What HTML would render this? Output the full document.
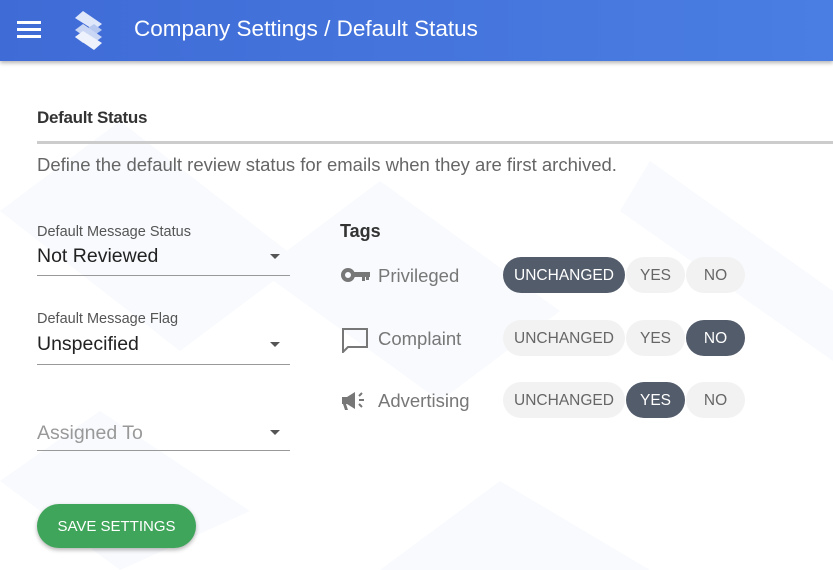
<!DOCTYPE html>
<html><head><style>
body{margin:0;width:833px;height:570px;overflow:hidden;background:#fff;font-family:"Liberation Sans",sans-serif;position:relative}
.hdr{position:absolute;left:0;top:0;width:833px;height:61px;background:linear-gradient(90deg,#3f6bd6,#4a7ee2);box-shadow:0 2px 4px rgba(0,0,0,.3)}
.t{position:absolute;white-space:nowrap}
.sel{position:absolute;left:37px;width:253px;border-bottom:1px solid #999}
.arr{position:absolute;right:10px;width:0;height:0;border-left:5px solid transparent;border-right:5px solid transparent;border-top:5px solid #555}
.b{position:absolute;height:36px;border-radius:18px;background:#f2f2f2;color:#666;font-size:15.5px;line-height:37px;text-align:center}
.on{background:#535c6b;color:#fff}
</style></head><body>
<svg style="position:absolute;left:0;top:61px" width="833" height="509">
<g fill="#f8fafd"><path d="M0 150 L120 60 L300 200 L180 290Z"/><path d="M380 120 L560 250 L440 340 L260 210Z"/><path d="M650 100 L833 230 L833 300 L620 150Z"/><path d="M100 350 L250 450 L120 509 L0 420Z"/><path d="M500 420 L650 509 L380 509Z"/></g></svg>
<div class="hdr">
<div style="position:absolute;left:17px;top:21px;width:24px;height:3px;background:#fff;box-shadow:0 7px 0 #fff,0 14px 0 #fff"></div>
<svg style="position:absolute;left:74px;top:9px" width="30" height="42"><path d="M1 9 L9 2 L28 15 L20 21Z" fill="#dfe7fa"/><path d="M20 15 L28 21 L9 34 L1 28Z" fill="#b6c8f0"/><path d="M1 21 L9 15 L28 28 L20 34Z" fill="#c9d7f5"/><path d="M1 28 L9 22 L28 34 L20 41Z" fill="#eef2fc"/></svg>
<div class="t" style="left:134px;top:16px;color:#fff;font-size:22.5px">Company Settings / Default Status</div>
</div>
<div class="t" style="left:37px;top:108px;font-size:17px;color:#333;font-weight:bold;letter-spacing:-0.3px">Default Status</div>
<div style="position:absolute;left:37px;top:141px;width:796px;height:3px;background:#ccc"></div>
<div class="t" style="left:37px;top:154px;font-size:18.5px;color:#666">Define the default review status for emails when they are first archived.</div>

<div class="t" style="left:37px;top:224px;font-size:14.5px;color:#555">Default Message Status</div>
<div class="sel" style="top:243px;height:32px"><div class="t" style="left:0;top:2px;font-size:19.5px;color:#222">Not Reviewed</div><div class="arr" style="top:11px"></div></div>
<div class="t" style="left:37px;top:311px;font-size:14.5px;color:#555">Default Message Flag</div>
<div class="sel" style="top:330px;height:34px"><div class="t" style="left:0;top:3px;font-size:19.5px;color:#222">Unspecified</div><div class="arr" style="top:12px"></div></div>
<div class="sel" style="top:420px;height:30px"><div class="t" style="left:0;top:2px;font-size:19.5px;color:#999">Assigned To</div><div class="arr" style="top:10px"></div></div>

<div style="position:absolute;left:37px;top:504px;width:159px;height:44px;border-radius:22px;background:#3fa55a;box-shadow:0 2px 4px rgba(0,0,0,.3);color:#fff;font-size:15px;line-height:45px;text-align:center">SAVE SETTINGS</div>

<div class="t" style="left:340px;top:221px;font-size:18px;color:#333;font-weight:bold">Tags</div>
<svg style="position:absolute;left:341px;top:267px" width="30" height="16"><circle cx="7" cy="8" r="5" fill="none" stroke="#777" stroke-width="4"/><rect x="11" y="5" width="18" height="5" fill="#777"/><rect x="21" y="8" width="3" height="6" fill="#777"/><rect x="25" y="8" width="3" height="5" fill="#777"/></svg>
<div class="t" style="left:378px;top:265px;font-size:18.5px;color:#777">Privileged</div>
<svg style="position:absolute;left:341px;top:327px" width="28" height="26"><path d="M2 2 H26 V20 H7 L2 25Z" fill="none" stroke="#777" stroke-width="2"/></svg>
<div class="t" style="left:378px;top:328px;font-size:18.5px;color:#777">Complaint</div>
<svg style="position:absolute;left:341px;top:390px" width="28" height="22"><path d="M1 7 H6 L14 2 V19 L6 14 H5 L7 20 H4 L2 14 H1Z" fill="#777"/><path d="M18 6 L21 3 M18 10 H23 M18 14 L21 17" stroke="#777" stroke-width="2"/></svg>
<div class="t" style="left:378px;top:390px;font-size:18.5px;color:#777">Advertising</div>

<div class="b on" style="left:503px;top:257px;width:122px">UNCHANGED</div>
<div class="b" style="left:626px;top:257px;width:59px">YES</div>
<div class="b" style="left:686px;top:257px;width:59px">NO</div>
<div class="b" style="left:503px;top:320px;width:122px">UNCHANGED</div>
<div class="b" style="left:626px;top:320px;width:59px">YES</div>
<div class="b on" style="left:686px;top:320px;width:59px">NO</div>
<div class="b" style="left:503px;top:382px;width:122px">UNCHANGED</div>
<div class="b on" style="left:626px;top:382px;width:59px">YES</div>
<div class="b" style="left:686px;top:382px;width:59px">NO</div>
</body></html>
